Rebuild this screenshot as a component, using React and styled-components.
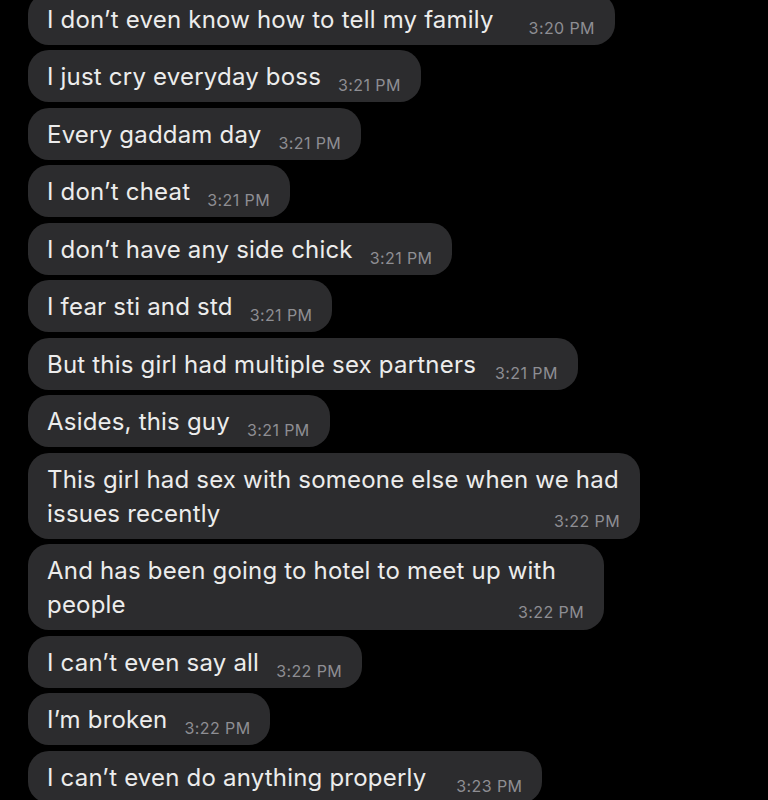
import React from 'react';
import styled, { createGlobalStyle } from 'styled-components';

const GlobalStyle = createGlobalStyle`
  html, body {
    margin: 0;
    padding: 0;
    background: #000;
  }
  body {
    font-family: Inter, "Noto Sans", "DejaVu Sans", sans-serif;
    -webkit-font-smoothing: antialiased;
  }
`;

const XScreen = styled.div`
  width: 768px;
  height: 800px;
  overflow: hidden;
  background: #000;
`;

const XList = styled.div`
  display: flex;
  flex-direction: column;
  align-items: flex-start;
  gap: 5.5px;
  margin-top: -7.5px;
  padding-left: 28px;
`;

const XBubble = styled.div`
  display: flex;
  flex-direction: ${props => (props.$stacked ? 'column' : 'row')};
  align-items: flex-end;
  box-sizing: border-box;
  width: ${props => (props.$width ? `${props.$width}px` : 'auto')};
  padding: 10px 20px 8px 19px;
  border-radius: 21px;
  background: #2c2c2e;
`;

const XText = styled.div`
  align-self: flex-start;
  font-size: 24px;
  line-height: 34px;
  letter-spacing: 0.2px;
  color: #ececec;
  white-space: nowrap;
`;

const XTime = styled.span`
  flex: none;
  font-size: 16px;
  line-height: 16px;
  letter-spacing: 0.4px;
  color: #8e8e93;
  margin-left: ${props => (props.$stacked ? 0 : props.$gap || 17)}px;
  margin-top: ${props => (props.$stacked ? '-18px' : 0)};
  margin-bottom: ${props => (props.$stacked ? '2px' : '1px')};
`;

const messages = [
  { lines: ['I don’t even know how to tell my family'], time: '3:20 PM', gap: 35 },
  { lines: ['I just cry everyday boss'], time: '3:21 PM' },
  { lines: ['Every gaddam day'], time: '3:21 PM' },
  { lines: ['I don’t cheat'], time: '3:21 PM' },
  { lines: ['I don’t have any side chick'], time: '3:21 PM' },
  { lines: ['I fear sti and std'], time: '3:21 PM' },
  { lines: ['But this girl had multiple sex partners'], time: '3:21 PM', gap: 19 },
  { lines: ['Asides, this guy'], time: '3:21 PM' },
  {
    lines: ['This girl had sex with someone else when we had', 'issues recently'],
    time: '3:22 PM',
    width: 612
  },
  {
    lines: ['And has been going to hotel to meet up with', 'people'],
    time: '3:22 PM',
    width: 576
  },
  { lines: ['I can’t even say all'], time: '3:22 PM' },
  { lines: ['I’m broken'], time: '3:22 PM' },
  { lines: ['I can’t even do anything properly'], time: '3:23 PM', gap: 30 }
];

const Message = ({ lines, time, gap, width }) => {
  const stacked = lines.length > 1;
  return (
    <XBubble $stacked={stacked} $width={width}>
      <XText>
        {lines.map((line, i) => (
          <div key={i}>{line}</div>
        ))}
      </XText>
      <XTime $stacked={stacked} $gap={gap}>{time}</XTime>
    </XBubble>
  );
};

const App = () => {
  return (
    <XScreen>
      <GlobalStyle />
      <XList>
        {messages.map((m, i) => (
          <Message key={i} {...m} />
        ))}
      </XList>
    </XScreen>
  );
};

export default App;
